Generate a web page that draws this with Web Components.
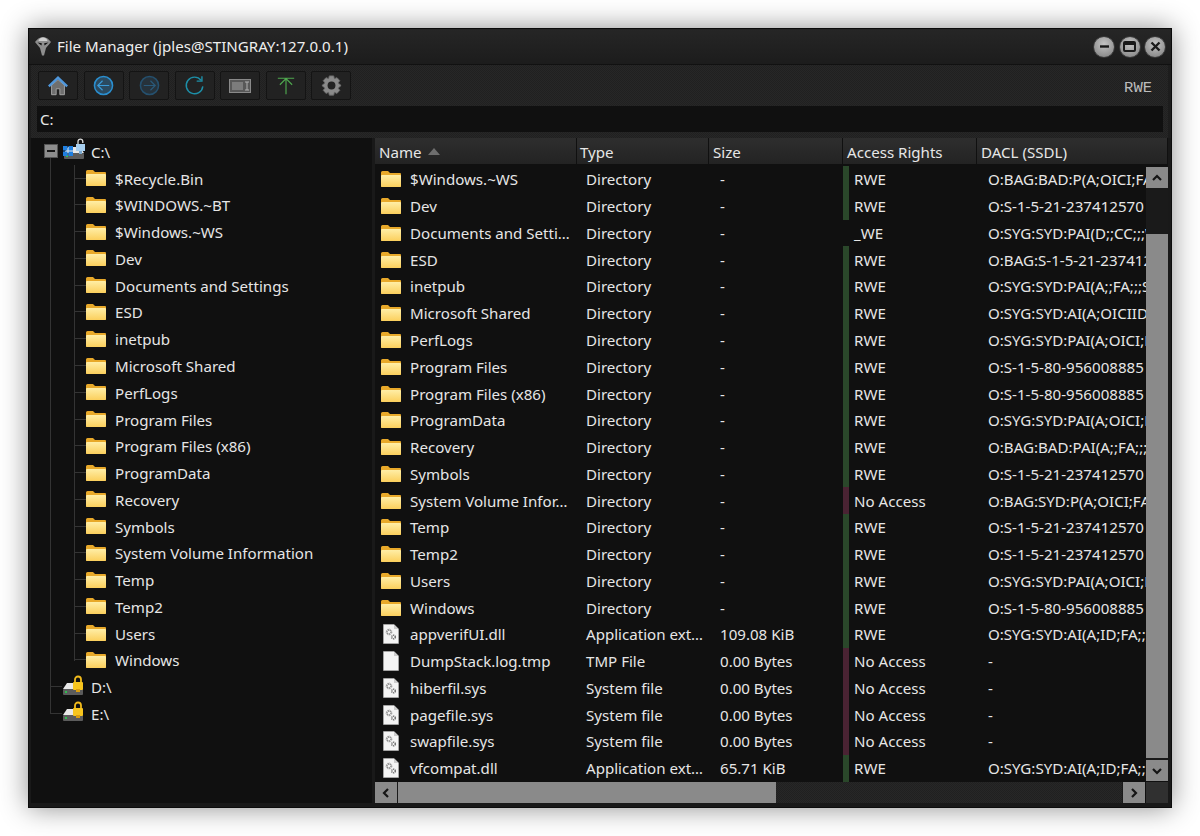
<!DOCTYPE html>
<html>
<head>
<meta charset="utf-8">
<title>File Manager</title>
<style>
  html, body { margin: 0; background: #fff; }
  body { padding: 28px; font-family: "Noto Sans", "Liberation Sans", sans-serif; }
</style>
</head>
<body>
<fm-window>
  <fm-titlebar slot="title">File Manager (jples@STINGRAY:127.0.0.1)</fm-titlebar>
  <fm-toolbar slot="tools"></fm-toolbar>
  <fm-tree slot="tree"></fm-tree>
  <fm-table slot="table"></fm-table>
</fm-window>

<script>
const ICONS = {
  folder: `<svg width="20" height="16" viewBox="0 0 20 16"><defs><linearGradient id="f" x1="0" y1="0" x2="0" y2="1"><stop offset="0" stop-color="#ffeea6"/><stop offset="1" stop-color="#fbcf5c"/></linearGradient></defs><path d="M0 1.5Q0 0 1.5 0H7L9 2H19Q20 2 20 3V15Q20 16 19 16H1Q0 16 0 15Z" fill="#e8a92a"/><rect x="0" y="4" width="20" height="12" rx="1" fill="url(#f)"/></svg>`,
  file: `<svg width="16" height="20" viewBox="0 0 16 20"><path d="M.5.5H11L15.5 5V19.5H.5Z" fill="#f4f4f4" stroke="#bbb" stroke-width=".6"/><path d="M11 .5V5H15.5Z" fill="#ccc"/></svg>`,
  gears: `<svg width="16" height="20" viewBox="0 0 16 20"><path d="M.5.5H11L15.5 5V19.5H.5Z" fill="#f4f4f4" stroke="#bbb" stroke-width=".6"/><path d="M11 .5V5H15.5Z" fill="#ccc"/><circle cx="6" cy="8" r="2.1" fill="none" stroke="#8c8c8c" stroke-width="1.6" stroke-dasharray="1.3 .6"/><circle cx="6" cy="8" r="3" fill="none" stroke="#a5a5a5" stroke-width=".8" stroke-dasharray="1 1"/><circle cx="10.5" cy="13" r="1.8" fill="none" stroke="#707070" stroke-width="1.5" stroke-dasharray="1.2 .6"/></svg>`,
  drive: `<svg width="22" height="16" viewBox="0 0 22 16"><path d="M5 3H17L21 9H1Z" fill="#e8e8e8"/><rect x="1" y="9" width="20" height="6" rx="1" fill="#5c5c5c"/><rect x="3" y="11" width="2" height="2" fill="#2fbf4f"/></svg>`,
  lock: `<svg width="12" height="18" viewBox="0 0 12 18"><path d="M3 8V4.5A3 3 0 0 1 9 4.5V8" fill="none" stroke="#f2bb1c" stroke-width="1.8"/><rect x="1" y="7" width="10" height="8" rx="1" fill="#f7c51e"/><rect x="4" y="14" width="4" height="3" fill="#d99d10"/></svg>`,
  unlock: `<svg width="10" height="16" viewBox="0 0 10 16"><path d="M2 6V3.500A2.400 2.400 0 0 1 6.800 3.500V5" fill="none" stroke="#dcdcdc" stroke-width="1.300"/><rect x="0" y="6" width="9" height="7" fill="#a7cff0"/><rect x="3" y="13" width="3" height="3" fill="#7aa9d0"/></svg>`,
  win: `<svg width="10" height="10" viewBox="0 0 10 10"><path d="M0 0H4.500V4.500H0ZM5.500 0H10V4.500H5.500ZM0 5.500H4.500V10H0ZM5.500 5.500H10V10H5.500Z" fill="#1f7fe0"/></svg>`,
  home: `<svg width="22" height="22" viewBox="0 0 24 24"><path d="M5 11V21.500H10V15H14V21.500H19V11L12 5Z" fill="#6f6f6f" stroke="#a8a8a8" stroke-width="1"/><path d="M2 12.500L12 3L22 12.500" fill="none" stroke="#4f97dc" stroke-width="2.600"/></svg>`,
  back: `<svg width="21" height="21" viewBox="0 0 22 22"><circle cx="11" cy="11" r="9.500" fill="#2b4a60" stroke="#2a8fd0" stroke-width="1.600"/><path d="M17 11H5M10 6L5 11L10 16" fill="none" stroke="#3a9ad8" stroke-width="1.200"/></svg>`,
  forward: `<svg width="21" height="21" viewBox="0 0 22 22"><circle cx="11" cy="11" r="9.500" fill="#26323b" stroke="#25506e" stroke-width="1.600"/><path d="M5 11H17M12 6L17 11L12 16" fill="none" stroke="#2a5a7a" stroke-width="1.200"/></svg>`,
  refresh: `<svg width="21" height="21" viewBox="0 0 24 24"><path d="M19.500 6A9.500 9.500 0 1 0 21.500 13" fill="none" stroke="#1d8fa8" stroke-width="1.600"/><path d="M20.500 1.500V7H14.500" fill="none" stroke="#1d8fa8" stroke-width="1.600"/></svg>`,
  rename: `<svg width="22" height="14" viewBox="0 0 22 14"><rect x=".5" y=".5" width="21" height="13" fill="#585858" stroke="#8a8a8a"/><rect x="3" y="3" width="11" height="8" fill="#7c7c7c"/><path d="M16 3H20M18 3V11M16 11H20" stroke="#b0b0b0" fill="none"/></svg>`,
  up: `<svg width="18" height="20" viewBox="0 0 22 22"><path d="M1 1.500H21M11 21V2M3.500 9.500L11 2L18.500 9.500" fill="none" stroke="#4fa84f" stroke-width="1.400"/></svg>`,
  gear: `<svg width="21" height="21" viewBox="0 0 24 24"><path d="M9.500 1H14.500L15.300 4.200L18.300 3L21.500 6.500L19.500 9L23 12L19.500 15L21.500 17.500L18.300 21L15.300 19.800L14.500 23H9.500L8.700 19.800L5.700 21L2.500 17.500L4.500 15L1 12L4.500 9L2.500 6.500L5.700 3L8.700 4.200Z" fill="#8a8a8a" stroke="#6a6a6a"/><circle cx="12" cy="12" r="4.500" fill="#232323"/></svg>`,
  alien: `<svg width="16" height="19" viewBox="0 0 16 19"><path d="M8 0C11.500 0 14 2.500 16 5C14.500 7 12.500 9 11 11L9 18.500H7L5 11C3.500 9 1.500 7 0 5C2 2.500 4.500 0 8 0Z" fill="#8e8e8e"/><path d="M8 .5C10.500 .5 12 2 12.500 4H3.500C4 2 5.500 .5 8 .5Z" fill="#cfcfcf"/><path d="M2.500 5.500L6.800 6.200L6.500 8.500ZM13.500 5.500L9.200 6.200L9.500 8.500Z" fill="#101010"/></svg>`
};

class FmIcon extends HTMLElement {
  connectedCallback() {
    if (this.shadowRoot) return;
    this.attachShadow({ mode: "open" });
    this.shadowRoot.innerHTML = `
      <style>:host { display: inline-flex; align-items: center; justify-content: center; flex: none; } svg { display: block; }</style>
      ${ICONS[this.getAttribute("name")] || ""}`;
  }
}

class FmWindow extends HTMLElement {
  constructor() {
    super();
    this.attachShadow({ mode: "open" });
    this.shadowRoot.innerHTML = `
      <style>
        :host {
          display: flex; flex-direction: column; box-sizing: border-box;
          width: 1144px; height: 780px; color: #e6e6e6;
          background: #1d1d1d; border: 1px solid #0c0c0c;
          box-shadow: 0 0 26px rgba(0,0,0,.45); font-size: 15.1px;
        }
        .panes { flex: 1; min-height: 0; display: flex; gap: 3px; padding: 0 3px 4px 2px; background: #191919; }
      </style>
      <slot name="title"></slot>
      <slot name="tools"></slot>
      <div class="panes"><slot name="tree"></slot><slot name="table"></slot></div>`;
  }
}

class FmTitlebar extends HTMLElement {
  constructor() {
    super();
    this.attachShadow({ mode: "open" });
    this.shadowRoot.innerHTML = `
      <style>
        :host {
          display: flex; align-items: center; box-sizing: border-box; height: 36px;
          padding: 0 5px 0 6px; background: linear-gradient(#262626, #1c1c1c); border-bottom: 1px solid #111;
        }
        .name { flex: 1; margin-left: 6px; padding-bottom: 2px; color: #eee; }
        .btns { display: flex; gap: 3.500px; }
        .btn {
          width: 22px; height: 22px; box-sizing: border-box; border-radius: 50%;
          background: radial-gradient(circle at 50% 35%, #c4c4c4, #7d7d7d); border: 1.500px solid #3a3a3a;
          display: flex; align-items: center; justify-content: center;
        }
      </style>
      <fm-icon name="alien"></fm-icon>
      <div class="name"><slot></slot></div>
      <div class="btns">
        <div class="btn"><svg width="11" height="11" viewBox="0 0 11 11"><path d="M1 5.500H10" stroke="#1a1a1a" stroke-width="2.400"/></svg></div>
        <div class="btn"><svg width="13" height="11" viewBox="0 0 13 11"><rect x="1" y="1" width="11" height="9" rx="1" fill="none" stroke="#1a1a1a" stroke-width="2"/><path d="M1 3H12" stroke="#1a1a1a" stroke-width="2"/></svg></div>
        <div class="btn"><svg width="11" height="11" viewBox="0 0 11 11"><path d="M1.500 1.500L9.500 9.500M9.500 1.500L1.500 9.500" stroke="#1a1a1a" stroke-width="2.400"/></svg></div>
      </div>`;
  }
}

class FmToolButton extends HTMLElement {
  constructor() {
    super();
    this.attachShadow({ mode: "open" });
    this.shadowRoot.innerHTML = `
      <style>
        :host {
          display: flex; align-items: center; justify-content: center; box-sizing: border-box;
          width: 40px; height: 29px; background: #222; border: 1px solid #141414; border-radius: 2px;
        }
      </style>
      <slot></slot>`;
  }
}

class FmToolbar extends HTMLElement {
  constructor() {
    super();
    this.attachShadow({ mode: "open" });
    const names = ["home", "back", "forward", "refresh", "rename", "up", "gear"];
    this.shadowRoot.innerHTML = `
      <style>
        :host {
          display: block; box-sizing: border-box; height: 73px; margin: 0 3px 0 2px; padding: 6px 5px 0 7px;
          background: repeating-conic-gradient(#272727 0 25%, #202020 0 50%) 0 0 / 2px 2px;
        }
        .row { display: flex; align-items: center; gap: 5.500px; height: 29px; }
        .rights { margin-left: auto; margin-right: 11px; margin-top: 5px; font: 15.500px "Liberation Mono", monospace; color: #bcbcbc; }
        .path {
          box-sizing: border-box; height: 26px; margin: 6px 0 0 -1px; padding: 0 0 0 3px; line-height: 26px;
          background: #101010; color: #e6e6e6;
        }
      </style>
      <div class="row">
        ${names.map(n => `<fm-tool-button><fm-icon name="${n}"></fm-icon></fm-tool-button>`).join("")}
        <div class="rights">RWE</div>
      </div>
      <div class="path">C:</div>`;
  }
}

class FmTreeRow extends HTMLElement {
  constructor() {
    super();
    this.attachShadow({ mode: "open" });
  }
  connectedCallback() {
    const kind = this.getAttribute("kind");
    const pre = {
      root: `<span class="box"><i></i></span><span class="ic"><fm-icon name="drive"></fm-icon><b><fm-icon name="win"></fm-icon></b><u><fm-icon name="unlock"></fm-icon></u></span>`,
      drive: `<span class="ic"><fm-icon name="drive"></fm-icon><u class="lk"><fm-icon name="lock"></fm-icon></u></span>`,
      child: `<fm-icon name="folder"></fm-icon>`,
      last: `<fm-icon name="folder"></fm-icon>`
    }[kind];
    const line = "linear-gradient(#343434,#343434)";
    const guides = {
      root: `${line} 19px 19px / 1px 8px no-repeat`,
      drive: `${line} 19px 0 / 1px 100% no-repeat, ${line} 19px 50% / 12px 1px no-repeat`,
      lastdrive: `${line} 19px 0 / 1px 14px no-repeat, ${line} 19px 50% / 12px 1px no-repeat`,
      child: `${line} 19px 0 / 1px 100% no-repeat, ${line} 43px 0 / 1px 100% no-repeat, ${line} 43px 50% / 12px 1px no-repeat`,
      last: `${line} 19px 0 / 1px 100% no-repeat, ${line} 43px 0 / 1px 14px no-repeat, ${line} 43px 50% / 12px 1px no-repeat`
    }[this.hasAttribute("end") ? "lastdrive" : kind];
    const left = { root: 13, drive: 31, child: 55, last: 55 }[kind];
    const gap = { root: 6, drive: 7, child: 9, last: 9 }[kind];
    this.shadowRoot.innerHTML = `
      <style>
        :host {
          display: flex; align-items: center; box-sizing: border-box; height: 26.770px;
          padding-left: ${left}px; white-space: nowrap; background: ${guides};
        }
        .label { margin-left: ${gap}px; padding-top: 1px; }
        .box {
          width: 14px; height: 14px; box-sizing: border-box; background: #8d8d8d; border: 1px solid #555;
          display: flex; align-items: center; justify-content: center; margin-right: 5px;
        }
        .box i { width: 8px; height: 2px; background: #161616; }
        .ic { position: relative; display: inline-flex; width: 22px; height: 18px; align-items: flex-end; }
        .ic b { position: absolute; left: 0; top: -2px; font-weight: normal; }
        .ic u { position: absolute; left: 13px; top: -4px; text-decoration: none; }
        .ic u.lk { left: 10px; top: -3px; }
      </style>
      ${pre}<span class="label"><slot></slot></span>`;
  }
}

class FmTree extends HTMLElement {
  constructor() {
    super();
    this.attachShadow({ mode: "open" });
    const kids = ["$Recycle.Bin", "$WINDOWS.~BT", "$Windows.~WS", "Dev", "Documents and Settings", "ESD", "inetpub",
      "Microsoft Shared", "PerfLogs", "Program Files", "Program Files (x86)", "ProgramData", "Recovery", "Symbols",
      "System Volume Information", "Temp", "Temp2", "Users", "Windows"];
    this.shadowRoot.innerHTML = `
      <style>
        :host { display: block; box-sizing: border-box; width: 341px; height: 100%; background: #101010; }
      </style>
      <fm-tree-row kind="root">C:\\</fm-tree-row>
      ${kids.map((k, i) => `<fm-tree-row kind="${i === kids.length - 1 ? "last" : "child"}">${k}</fm-tree-row>`).join("")}
      <fm-tree-row kind="drive">D:\\</fm-tree-row>
      <fm-tree-row kind="drive" end>E:\\</fm-tree-row>`;
  }
}

class FmScrollbar extends HTMLElement {
  constructor() {
    super();
    this.attachShadow({ mode: "open" });
  }
  connectedCallback() {
    const vert = this.getAttribute("dir") === "v";
    const chev = p => `<svg width="12" height="12" viewBox="0 0 12 12"><path d="${p}" fill="none" stroke="#151515" stroke-width="2.200"/></svg>`;
    const first = vert ? "M2 8L6 4L10 8" : "M8 2L4 6L8 10";
    const last = vert ? "M2 4L6 8L10 4" : "M4 2L8 6L4 10";
    this.shadowRoot.innerHTML = `
      <style>
        :host {
          display: flex; flex-direction: ${vert ? "column" : "row"}; flex: none; box-sizing: border-box;
          ${vert ? "width: 22px; margin: 1px 0 1px;" : "height: 21px;"} gap: 1px;
          background: #1a1a1a;
        }
        .btn { flex: none; ${vert ? "height: 21px;" : "width: 22px;"} background: #8a8a8a; display: flex; align-items: center; justify-content: center; }
        .track { flex: 1; min-${vert ? "height" : "width"}: 0; display: flex; flex-direction: ${vert ? "column" : "row"}; }
        .before { flex: none; ${vert ? "height: 45px;" : "width: 0;"} }
        .thumb { flex: 1; background: #8a8a8a; }
        .after { flex: none; ${vert ? "height: 1px;" : "width: 346px; background: repeating-conic-gradient(#272727 0 25%, #202020 0 50%) 0 0 / 2px 2px;"} }
      </style>
      <div class="btn">${chev(first)}</div>
      <div class="track"><div class="before"></div><div class="thumb"></div><div class="after"></div></div>
      <div class="btn">${chev(last)}</div>`;
  }
}

class FmRow extends HTMLElement {
  constructor() {
    super();
    this.attachShadow({ mode: "open" });
  }
  connectedCallback() {
    const a = n => this.getAttribute(n) || "";
    const rights = a("rights");
    const bar = rights === "RWE" ? "#2a472a" : rights === "No Access" ? "#4a2333" : "transparent";
    this.shadowRoot.innerHTML = `
      <style>
        :host {
          display: grid; grid-template-columns: 201px 133px 134px 134px 169px; height: 26.770px;
          align-items: center; white-space: nowrap;
        }
        .cell { height: 100%; display: flex; align-items: center; overflow: hidden; box-sizing: border-box; }
        .name { padding-left: 6px; }
        .name span { margin-left: 9px; }
        .name.f fm-icon { margin: 0 2px; }
        .type { padding-left: 10px; }
        .size { padding-left: 11px; }
        .rights { padding-left: 5px; border-left: 6px solid ${bar}; }
        .dacl { padding-left: 11px; }
      </style>
      <div class="cell name ${a("icon") === "folder" ? "" : "f"}"><fm-icon name="${a("icon")}"></fm-icon><span>${a("name")}</span></div>
      <div class="cell type">${a("type")}</div>
      <div class="cell size">${a("size")}</div>
      <div class="cell rights">${rights}</div>
      <div class="cell dacl">${a("dacl")}</div>`;
  }
}

class FmTable extends HTMLElement {
  constructor() {
    super();
    this.attachShadow({ mode: "open" });
    const S = "O:S-1-5-21-237412570";
    const N = "O:S-1-5-80-956008885";
    const Y = "O:SYG:SYD:PAI(A;OICI;FA";
    const D = [
      ["$Windows.~WS", "O:BAG:BAD:P(A;OICI;FA;"], ["Dev", S],
      ["Documents and Setti…", "O:SYG:SYD:PAI(D;;CC;;;W", "_WE"], ["ESD", "O:BAG:S-1-5-21-237412"],
      ["inetpub", "O:SYG:SYD:PAI(A;;FA;;;SY"], ["Microsoft Shared", "O:SYG:SYD:AI(A;OICIID;F"],
      ["PerfLogs", Y], ["Program Files", N], ["Program Files (x86)", N], ["ProgramData", Y],
      ["Recovery", "O:BAG:BAD:PAI(A;;FA;;;BA"], ["Symbols", S],
      ["System Volume Infor…", "O:BAG:SYD:P(A;OICI;FA;", "No Access"], ["Temp", S], ["Temp2", S],
      ["Users", Y], ["Windows", N]
    ];
    const F = [
      ["gears", "appverifUI.dll", "Application ext…", "109.08 KiB", "RWE", "O:SYG:SYD:AI(A;ID;FA;;;"],
      ["file", "DumpStack.log.tmp", "TMP File", "0.00 Bytes", "No Access", "-"],
      ["gears", "hiberfil.sys", "System file", "0.00 Bytes", "No Access", "-"],
      ["gears", "pagefile.sys", "System file", "0.00 Bytes", "No Access", "-"],
      ["gears", "swapfile.sys", "System file", "0.00 Bytes", "No Access", "-"],
      ["gears", "vfcompat.dll", "Application ext…", "65.71 KiB", "RWE", "O:SYG:SYD:AI(A;ID;FA;;;"]
    ];
    const row = (icon, name, type, size, rights, dacl) =>
      `<fm-row icon="${icon}" name="${name}" type="${type}" size="${size}" rights="${rights}" dacl="${dacl}"></fm-row>`;
    const rows = D.map(d => row("folder", d[0], "Directory", "-", d[2] || "RWE", d[1])).join("")
      + F.map(f => row(...f)).join("");
    const heads = ["Name", "Type", "Size", "Access Rights", "DACL (SSDL)"];
    this.shadowRoot.innerHTML = `
      <style>
        :host { display: flex; flex-direction: column; flex: 1; min-width: 0; background: #101010; height: 100%; }
        .head { display: grid; grid-template-columns: 202px 132px 134px 134px 1fr; height: 28px; flex: none; box-sizing: border-box; padding-bottom: 2px; background: #101010; }
        .head div { display: flex; align-items: center; gap: 6px; padding: 2px 0 0 4px; margin-right: 1px; background: linear-gradient(#2e2e2e, #232323); }
        .head div:nth-child(2) { padding-left: 3px; }
        .head svg { margin-top: -2px; }
        .body { flex: 1; min-height: 0; display: flex; }
        .rows { flex: 1; min-width: 0; overflow: hidden; }
        .bottom { display: flex; flex: none; height: 21px; }
        .bottom fm-scrollbar { flex: 1; }
        .corner { width: 22px; margin-left: 1px; background: #303030; }
      </style>
      <div class="head">${heads.map((h, i) => `<div>${h}${i === 0 ? `<svg width="12" height="7" viewBox="0 0 12 7"><path d="M6 0L12 7H0Z" fill="#6e6e6e"/></svg>` : ""}</div>`).join("")}</div>
      <div class="body"><div class="rows">${rows}</div><fm-scrollbar dir="v"></fm-scrollbar></div>
      <div class="bottom"><fm-scrollbar dir="h"></fm-scrollbar><div class="corner"></div></div>`;
  }
}

customElements.define("fm-icon", FmIcon);
customElements.define("fm-window", FmWindow);
customElements.define("fm-titlebar", FmTitlebar);
customElements.define("fm-tool-button", FmToolButton);
customElements.define("fm-toolbar", FmToolbar);
customElements.define("fm-tree-row", FmTreeRow);
customElements.define("fm-tree", FmTree);
customElements.define("fm-scrollbar", FmScrollbar);
customElements.define("fm-row", FmRow);
customElements.define("fm-table", FmTable);
</script>
</body>
</html>
